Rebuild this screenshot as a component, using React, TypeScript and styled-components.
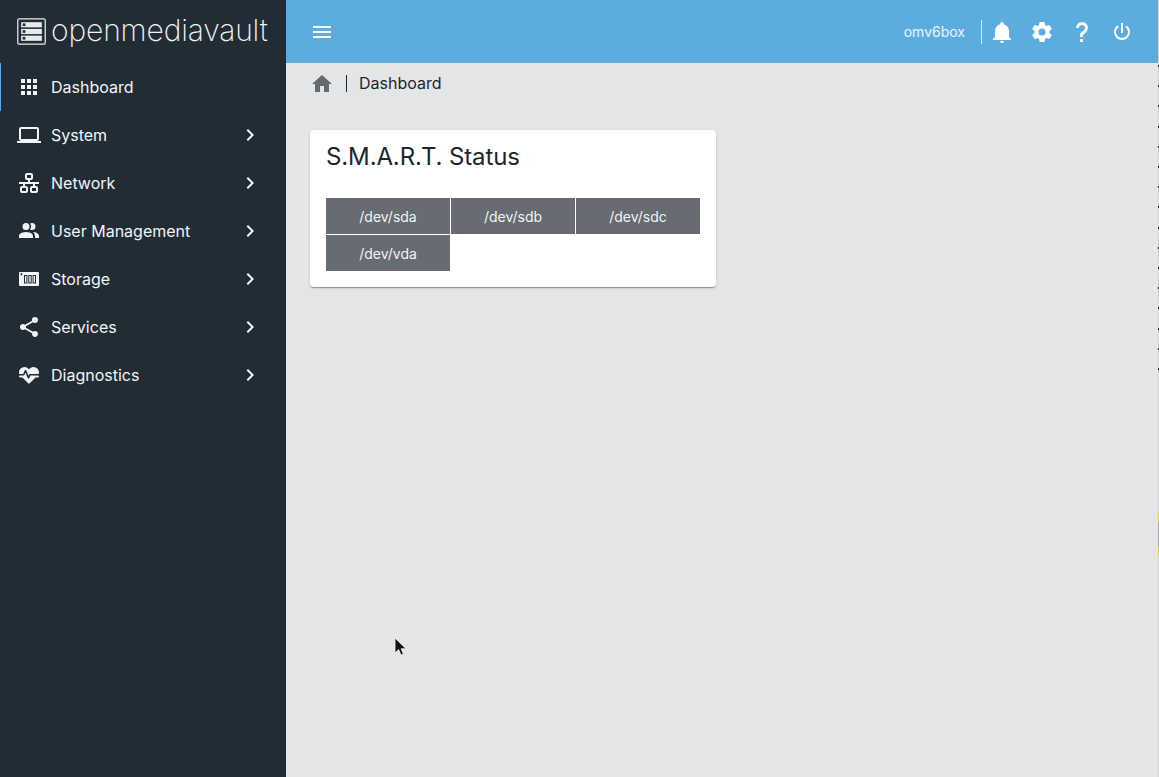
import React from "react";
import styled, { createGlobalStyle } from "styled-components";

const GlobalStyle = createGlobalStyle`
  html, body {
    margin: 0;
    height: 100%;
    background: #e4e5e7;
    font-family: Inter, "Liberation Sans", sans-serif;
  }
  #root {
    height: 100%;
  }
`;

const ICONS = {
  apps: "M4 8h4V4H4v4zm6 12h4v-4h-4v4zm-6 0h4v-4H4v4zm0-6h4v-4H4v4zm6 0h4v-4h-4v4zm6-10v4h4V4h-4zm-6 4h4V4h-4v4zm6 6h4v-4h-4v4zm0 6h4v-4h-4v4z",
  laptop:
    "M20 18c1.1 0 1.99-.9 1.99-2L22 6c0-1.1-.9-2-2-2H4c-1.1 0-2 .9-2 2v10c0 1.1.9 2 2 2H0v2h24v-2h-4zM4 6h16v10H4V6z",
  lan: "M10,2C8.89,2 8,2.89 8,4V7C8,8.11 8.89,9 10,9H11V11H2V13H6V15H5C3.89,15 3,15.89 3,17V20C3,21.11 3.89,22 5,22H9C10.11,22 11,21.11 11,20V17C11,15.89 10.11,15 9,15H8V13H16V15H15C13.89,15 13,15.89 13,17V20C13,21.11 13.89,22 15,22H19C20.11,22 21,21.11 21,20V17C21,15.89 20.11,15 19,15H18V13H22V11H13V9H14C15.11,9 16,8.11 16,7V4C16,2.89 15.11,2 14,2H10M10,4H14V7H10V4M5,17H9V20H5V17M15,17H19V20H15V17Z",
  users:
    "M16 17V19H2V17S2 13 9 13 16 17 16 17M12.5 7.5A3.5 3.5 0 1 0 9 11A3.5 3.5 0 0 0 12.5 7.5M15.94 13A5.32 5.32 0 0 1 18 17V19H22V17S22 13.37 15.94 13M15 4A3.39 3.39 0 0 0 13.07 4.59A5 5 0 0 1 13.07 10.41A3.39 3.39 0 0 0 15 11A3.5 3.5 0 0 0 15 4Z",
  nas: "M3 5h18a1 1 0 0 1 1 1v12a1 1 0 0 1-1 1H3a1 1 0 0 1-1-1V6a1 1 0 0 1 1-1zM3.6 6.2v2h1.6v-2H3.6zM7 8v8.6h3.4V8H7zm1 1h1.4v6.6H8V9zM11.3 8v8.6h3.4V8h-3.4zm1 1h1.4v6.6h-1.4V9zM15.6 8v8.6H19V8h-3.4zm1 1H18v6.6h-1.4V9z",
  share:
    "M18,16.08C17.24,16.08 16.56,16.38 16.04,16.85L8.91,12.7C8.96,12.47 9,12.24 9,12C9,11.76 8.96,11.53 8.91,11.3L15.96,7.19C16.5,7.69 17.21,8 18,8A3,3 0 0,0 21,5A3,3 0 0,0 18,2A3,3 0 0,0 15,5C15,5.24 15.04,5.47 15.09,5.7L8.04,9.81C7.5,9.31 6.79,9 6,9A3,3 0 0,0 3,12A3,3 0 0,0 6,15C6.79,15 7.5,14.69 8.04,14.19L15.16,18.34C15.11,18.55 15.08,18.77 15.08,19C15.08,20.61 16.39,21.91 18,21.91C19.61,21.91 20.92,20.61 20.92,19A2.92,2.92 0 0,0 18,16.08Z",
  heart:
    "M7.5,4A5.5,5.5 0 0,0 2,9.5C2,10 2.09,10.5 2.22,11H6.3L7.57,7.63C7.87,6.83 9.05,6.75 9.43,7.63L11.5,13L12.09,11.58C12.22,11.25 12.57,11 13,11H21.78C21.91,10.5 22,10 22,9.5A5.5,5.5 0 0,0 16.5,4C14.64,4 13,4.93 12,6.34C11,4.93 9.36,4 7.5,4V4M3,12.5A1,1 0 0,0 2,13.5A1,1 0 0,0 3,14.5H5.44L11,20C12,20.9 12,20.9 13,20L18.56,14.5H21A1,1 0 0,0 22,13.5A1,1 0 0,0 21,12.5H13.4L12.47,14.8C12.07,15.81 10.92,15.67 10.55,14.83L8.5,9.5L7.54,11.83C7.39,12.21 7.05,12.5 6.6,12.5H3Z",
  chevron: "M10 6L8.59 7.41 13.17 12l-4.58 4.59L10 18l6-6z",
  menu: "M3 18h18v-2H3v2zm0-5h18v-2H3v2zm0-7v2h18V6H3z",
  bell: "M21,19V20H3V19L5,17V11C5,7.9 7.03,5.17 10,4.29C10,4.19 10,4.1 10,4A2,2 0 0,1 12,2A2,2 0 0,1 14,4C14,4.1 14,4.19 14,4.29C16.97,5.17 19,7.9 19,11V17L21,19M14,21A2,2 0 0,1 12,23A2,2 0 0,1 10,21",
  cog: "M12,15.5A3.5,3.5 0 0,1 8.5,12A3.5,3.5 0 0,1 12,8.5A3.5,3.5 0 0,1 15.5,12A3.5,3.5 0 0,1 12,15.5M19.43,12.97C19.47,12.65 19.5,12.33 19.5,12C19.5,11.67 19.47,11.34 19.43,11L21.54,9.37C21.73,9.22 21.78,8.95 21.66,8.73L19.66,5.27C19.54,5.05 19.27,4.96 19.05,5.05L16.56,6.05C16.04,5.66 15.5,5.32 14.87,5.07L14.5,2.42C14.46,2.18 14.25,2 14,2H10C9.75,2 9.54,2.18 9.5,2.42L9.13,5.07C8.5,5.32 7.96,5.66 7.44,6.05L4.95,5.05C4.73,4.96 4.46,5.05 4.34,5.27L2.34,8.73C2.21,8.95 2.27,9.22 2.46,9.37L4.57,11C4.53,11.34 4.5,11.67 4.5,12C4.5,12.33 4.53,12.65 4.57,12.97L2.46,14.63C2.27,14.78 2.21,15.05 2.34,15.27L4.34,18.73C4.46,18.95 4.73,19.03 4.95,18.95L7.44,17.94C7.96,18.34 8.5,18.68 9.13,18.93L9.5,21.58C9.54,21.82 9.75,22 10,22H14C14.25,22 14.46,21.82 14.5,21.58L14.87,18.93C15.5,18.67 16.04,18.34 16.56,17.94L19.05,18.95C19.27,19.03 19.54,18.95 19.66,18.73L21.66,15.27C21.78,15.05 21.73,14.78 21.54,14.63L19.43,12.97Z",
  help: "M10,19H13V22H10V19M12,2C17.35,2.22 19.68,7.62 16.5,11.67C15.67,12.67 14.33,13.33 13.67,14.17C13,15 13,16 13,17H10C10,15.33 10,13.92 10.67,12.92C11.33,11.92 12.67,11.33 13.5,10.67C15.92,8.43 15.32,5.26 12,5A3,3 0 0,0 9,8H6A6,6 0 0,1 12,2Z",
  power:
    "M16.56,5.44L15.11,6.89C16.84,7.94 18,9.83 18,12A6,6 0 0,1 12,18A6,6 0 0,1 6,12C6,9.83 7.16,7.94 8.88,6.88L7.44,5.44C5.36,6.88 4,9.28 4,12A8,8 0 0,0 12,20A8,8 0 0,0 20,12C20,9.28 18.64,6.88 16.56,5.44M13,3H11V13H13",
  home: "M10 20v-6h4v6h5v-8h3L12 3 2 12h3v8z"
};

type IconName = keyof typeof ICONS;

const Icon = ({ name }: { name: IconName }) => (
  <IconSvg viewBox="0 0 24 24">
    <path d={ICONS[name]} fillRule="evenodd" />
  </IconSvg>
);

const MENU: { label: string; icon: IconName; sub: boolean }[] = [
  { label: "Dashboard", icon: "apps", sub: false },
  { label: "System", icon: "laptop", sub: true },
  { label: "Network", icon: "lan", sub: true },
  { label: "User Management", icon: "users", sub: true },
  { label: "Storage", icon: "nas", sub: true },
  { label: "Services", icon: "share", sub: true },
  { label: "Diagnostics", icon: "heart", sub: true }
];

const DEVICES = ["/dev/sda", "/dev/sdb", "/dev/sdc", "/dev/vda"];

const App = () => {
  return (
    <Wrapper>
      <GlobalStyle />
      <Sidebar>
        <Brand>
          <LogoMark viewBox="0 0 28 26">
            <rect x="0.75" y="0.75" width="26.5" height="24.5" rx="1.5" fill="none" stroke="#e8eaec" strokeWidth="1.2" />
            <rect x="4" y="4" width="20" height="5" fill="#e8eaec" />
            <rect x="4" y="10.5" width="20" height="5" fill="#e8eaec" />
            <rect x="4" y="17" width="20" height="5" fill="#e8eaec" />
            <rect x="5.5" y="5.2" width="2.6" height="2.6" fill="#212c35" />
            <rect x="5.5" y="11.7" width="2.6" height="2.6" fill="#212c35" />
            <rect x="5.5" y="18.2" width="2.6" height="2.6" fill="#212c35" />
          </LogoMark>
          <BrandName>openmediavault</BrandName>
        </Brand>
        {MENU.map(item => (
          <MenuRow key={item.label} active={item.label === "Dashboard"}>
            <Icon name={item.icon} />
            <MenuLabel>{item.label}</MenuLabel>
            {item.sub && <Icon name="chevron" />}
          </MenuRow>
        ))}
      </Sidebar>
      <Main>
        <Toolbar>
          <Icon name="menu" />
          <Spacer />
          <HostName>omv6box</HostName>
          <ToolDivider />
          <ToolButton><Icon name="bell" /></ToolButton>
          <ToolButton><Icon name="cog" /></ToolButton>
          <ToolButton><Icon name="help" /></ToolButton>
          <ToolButton><Icon name="power" /></ToolButton>
        </Toolbar>
        <Breadcrumb>
          <Icon name="home" />
          <CrumbDivider />
          <CrumbText>Dashboard</CrumbText>
        </Breadcrumb>
        <Content>
          <Card>
            <CardTitle>S.M.A.R.T. Status</CardTitle>
            <DeviceGrid>
              {DEVICES.map(device => (
                <Device key={device}>{device}</Device>
              ))}
            </DeviceGrid>
          </Card>
        </Content>
      </Main>
      <EdgeStrip />
      <Pointer viewBox="0 0 14 22">
        <path d="M1 1v15l3.6-3.4L7 18l2.4-1-2.3-5.2H12z" fill="#111" stroke="#f4f4f4" strokeWidth="0.8" />
      </Pointer>
    </Wrapper>
  );
};

const Wrapper = styled.div`
  position: relative;
  display: flex;
  height: 777px;
  overflow: hidden;
`;

const IconSvg = styled.svg`
  width: 24px;
  height: 24px;
  flex: none;
  fill: currentColor;
`;

const Sidebar = styled.nav`
  display: flex;
  flex-direction: column;
  flex: none;
  width: 286px;
  background: #212c35;
  color: #f2f5f7;
`;

const Brand = styled.div`
  display: flex;
  align-items: center;
  gap: 5px;
  height: 63px;
  padding-left: 17px;
`;

const LogoMark = styled.svg`
  width: 29px;
  height: 27px;
  flex: none;
`;

const BrandName = styled.span`
  font-family: Inter, sans-serif;
  font-weight: 200;
  font-size: 30px;
  letter-spacing: -0.15px;
  line-height: 1;
  margin-bottom: 4px;
  color: #f2f4f5;
`;

const MenuRow = styled.div<{ active: boolean }>`
  display: flex;
  align-items: center;
  gap: 10px;
  height: 48px;
  padding: 0 24px 0 17px;
  box-shadow: ${props => (props.active ? "inset 1px 0 0 #5dacdf" : "none")};
`;

const MenuLabel = styled.span`
  flex: 1;
  font-size: 16px;
`;

const Main = styled.main`
  display: flex;
  flex-direction: column;
  flex: 1;
  min-width: 0;
`;

const Toolbar = styled.header`
  display: flex;
  align-items: center;
  flex: none;
  height: 63px;
  padding: 0 17px 0 24px;
  box-sizing: border-box;
  background: #5dacdf;
  color: #fff;
`;

const Spacer = styled.div`
  flex: 1;
`;

const HostName = styled.span`
  font-size: 14px;
  color: #eaf4fb;
`;

const ToolDivider = styled.div`
  width: 1px;
  height: 24px;
  margin-left: 16px;
  background: #d5e8f5;
`;

const ToolButton = styled.div`
  display: flex;
  align-items: center;
  justify-content: center;
  width: 40px;
  height: 40px;
`;

const Breadcrumb = styled.div`
  display: flex;
  align-items: center;
  height: 41px;
  padding-left: 24px;
  color: #666a6e;
`;

const CrumbDivider = styled.div`
  width: 1px;
  height: 17px;
  margin: 0 12px;
  background: #212529;
`;

const CrumbText = styled.span`
  font-size: 16px;
  margin-bottom: 2px;
  color: #212529;
`;

const Content = styled.div`
  padding: 26px 24px;
`;

const Card = styled.section`
  width: 406px;
  box-sizing: border-box;
  padding: 16px;
  border-radius: 4px;
  background: #fff;
  box-shadow: 0 2px 1px -1px rgba(0, 0, 0, 0.2), 0 1px 1px rgba(0, 0, 0, 0.14), 0 1px 3px rgba(0, 0, 0, 0.12);
`;

const CardTitle = styled.h2`
  margin: 0 0 30px;
  font-size: 24px;
  font-weight: 400;
  letter-spacing: -0.12px;
  line-height: 22px;
  color: #212529;
`;

const DeviceGrid = styled.div`
  display: grid;
  grid-template-columns: repeat(3, 124px);
  grid-auto-rows: 36px;
  gap: 1px;
`;

const Device = styled.div`
  display: flex;
  align-items: center;
  justify-content: center;
  font-size: 14px;
  color: #f2f4f5;
  background: #666c72;
`;

/* stray capture artefact down the last pixel column of the screenshot */
const EdgeStrip = styled.div`
  position: absolute;
  top: 0;
  right: 0;
  width: 1px;
  height: 777px;
  background:
    linear-gradient(#d6d63c, #d6d63c) 0 511px / 1px 11px no-repeat,
    linear-gradient(#d6d63c, #d6d63c) 0 546px / 1px 10px no-repeat,
    linear-gradient(#a9abb0, #a9abb0) 0 522px / 1px 24px no-repeat,
    repeating-linear-gradient(#1c1c1c 0 2px, transparent 2px 20.2px) 0 65px / 1px 316px no-repeat,
    #cfd0d2;
`;

const Pointer = styled.svg`
  position: absolute;
  left: 394px;
  top: 637px;
  width: 14px;
  height: 22px;
`;

export default App;
